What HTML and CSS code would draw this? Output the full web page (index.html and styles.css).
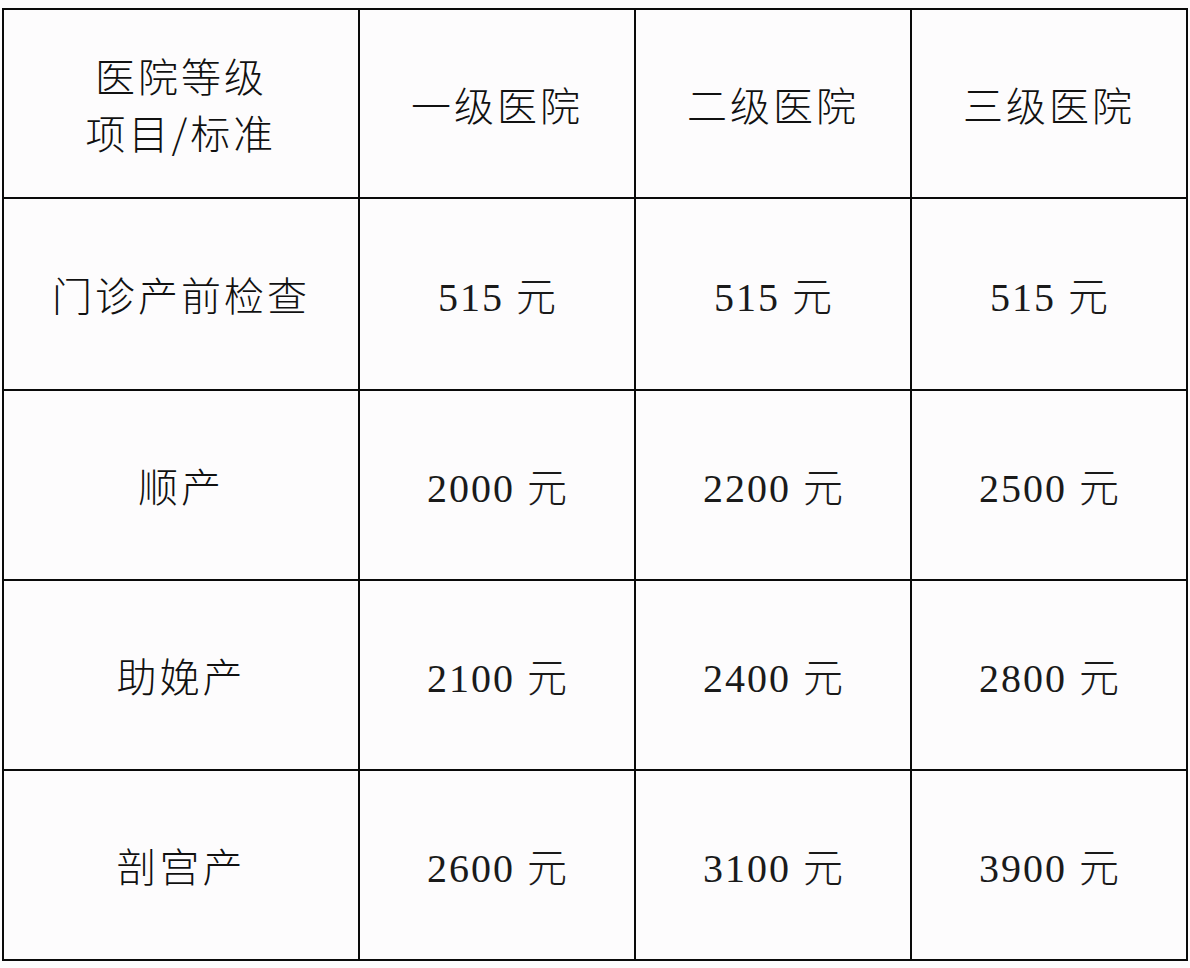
FILE: index.html
```html
<!DOCTYPE html>
<html lang="zh-CN">
<head>
<meta charset="utf-8">
<link rel="stylesheet" href="styles.css">
</head>
<body>
<table class="fees">
  <colgroup>
    <col class="c-first">
    <col class="c-std">
    <col class="c-std">
    <col class="c-std">
  </colgroup>
  <tr class="r-head">
    <td class="cell cjk"><div class="line">医院等级</div><div class="line">项目/标准</div></td>
    <td class="cell cjk">一级医院</td>
    <td class="cell cjk">二级医院</td>
    <td class="cell cjk">三级医院</td>
  </tr>
  <tr class="r-a">
    <td class="cell cjk">门诊产前检查</td>
    <td class="cell num">515 <span class="unit">元</span></td>
    <td class="cell num">515 <span class="unit">元</span></td>
    <td class="cell num">515 <span class="unit">元</span></td>
  </tr>
  <tr class="r-b">
    <td class="cell cjk">顺产</td>
    <td class="cell num">2000 <span class="unit">元</span></td>
    <td class="cell num">2200 <span class="unit">元</span></td>
    <td class="cell num">2500 <span class="unit">元</span></td>
  </tr>
  <tr class="r-b">
    <td class="cell cjk">助娩产</td>
    <td class="cell num">2100 <span class="unit">元</span></td>
    <td class="cell num">2400 <span class="unit">元</span></td>
    <td class="cell num">2800 <span class="unit">元</span></td>
  </tr>
  <tr class="r-b">
    <td class="cell cjk">剖宫产</td>
    <td class="cell num">2600 <span class="unit">元</span></td>
    <td class="cell num">3100 <span class="unit">元</span></td>
    <td class="cell num">3900 <span class="unit">元</span></td>
  </tr>
</table>
</body>
</html>
```
FILE: styles.css
```css
html, body {
  margin: 0;
  padding: 0;
  background: #fdfcfd;
}
body {
  padding: 8px 0 0 2px;
}
.fees {
  border-collapse: collapse;
  table-layout: fixed;
  width: 1186px;
  background: #fdfcfd;
}
.c-first { width: 356px; }
.c-std { width: 276px; }
.r-head { height: 189px; }
.r-a { height: 192px; }
.r-b { height: 190px; }
.cell {
  border: 2px solid #0a0a0a;
  text-align: center;
  vertical-align: middle;
  padding: 0;
  color: #111;
}
.cjk {
  font-family: "Noto Sans CJK SC", "Liberation Sans", sans-serif;
  font-weight: 300;
  font-size: 40px;
  letter-spacing: 3px;
}
.line {
  line-height: 57px;
}
.num {
  font-family: "Liberation Serif", "Noto Sans CJK SC", serif;
  font-size: 40px;
  font-weight: 400;
  letter-spacing: 2px;
  color: #1a1a1a;
}
.unit {
  font-family: "Noto Sans CJK SC", sans-serif;
  font-weight: 300;
  font-size: 40px;
  letter-spacing: 0;
}
```
